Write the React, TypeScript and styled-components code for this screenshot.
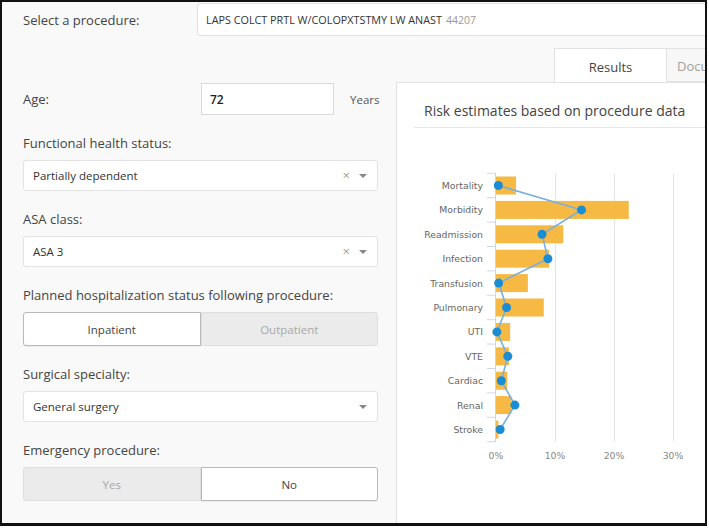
import React from 'react';
import styled, { createGlobalStyle } from 'styled-components';

const GlobalStyle = createGlobalStyle`
  body {
    margin: 0;
    background: #fff;
  }
`;

const Frame = styled.div`
  width: 707px;
  height: 526px;
  box-sizing: border-box;
  border: 2px solid #111;
  border-bottom-width: 3px;
  background: #f9f9f9;
  overflow: hidden;
  display: flex;
  flex-direction: column;
  font-family: 'Open Sans', 'Noto Sans', sans-serif;
  color: #444;
`;

const TopBar = styled.div`
  display: flex;
  align-items: center;
  padding: 1px 0 0 21px;
  flex-shrink: 0;
`;

const FieldLabel = styled.div<{ $width?: number }>`
  font-size: 13px;
  line-height: 20px;
  color: #444;
  width: ${(p) => (p.$width ? `${p.$width}px` : 'auto')};
  flex-shrink: 0;
`;

const ProcedureBox = styled.div`
  width: 540px;
  height: 33px;
  box-sizing: border-box;
  flex-shrink: 0;
  border: 1px solid #e1e1e1;
  border-radius: 3px;
  background: #fff;
  padding: 0 8px;
  display: flex;
  align-items: center;
  gap: 4px;
  font-size: 10.8px;
  color: #333;
`;

const Code = styled.span`
  color: #999;
  font-size: 10.5px;
`;

const Main = styled.div`
  display: flex;
  align-items: flex-start;
  flex: 1;
  min-height: 0;
`;

const LeftCol = styled.div`
  width: 355px;
  margin-left: 21px;
  padding-top: 47px;
  flex-shrink: 0;
`;

const AgeRow = styled.div`
  display: flex;
  align-items: center;
  height: 32px;
`;

const AgeInput = styled.div`
  width: 133px;
  height: 32px;
  box-sizing: border-box;
  flex-shrink: 0;
  border: 1px solid #d9d9d9;
  background: #fff;
  padding-left: 8px;
  display: flex;
  align-items: center;
  font-size: 12px;
  font-weight: 600;
  color: #222;
`;

const Unit = styled.span`
  margin-left: 16px;
  font-size: 11.5px;
  color: #555;
  white-space: nowrap;
`;

const Field = styled.div`
  margin-top: 18px;
  ${FieldLabel} {
    margin-bottom: 7px;
  }
`;

const Select = styled.div`
  height: 31px;
  box-sizing: border-box;
  border: 1px solid #e3e3e3;
  border-radius: 3px;
  background: #fff;
  padding: 0 10px 0 9px;
  display: flex;
  align-items: center;
  font-size: 11.5px;
  color: #333;
`;

const SelectValue = styled.span`
  flex: 1;
`;

const Clear = styled.span`
  font-size: 13px;
  color: #a0a0a0;
  margin-right: 9px;
  line-height: 1;
`;

const Caret = styled.span`
  width: 0;
  height: 0;
  border-left: 4px solid transparent;
  border-right: 4px solid transparent;
  border-top: 4px solid #888;
`;

const Toggle = styled.div`
  display: grid;
  grid-template-columns: 1fr 1fr;
  height: 34px;
`;

const ToggleOption = styled.div<{ $active?: boolean }>`
  display: flex;
  align-items: center;
  justify-content: center;
  font-size: 11.5px;
  box-sizing: border-box;
  border: 1px solid ${(p) => (p.$active ? '#b9b9b9' : '#dedede')};
  background: ${(p) => (p.$active ? '#fff' : '#ebebeb')};
  color: ${(p) => (p.$active ? '#444' : '#a8a8a8')};
  box-shadow: ${(p) => (p.$active ? '0 1px 1px rgba(0,0,0,0.06)' : 'none')};
  &:first-child {
    border-radius: 3px 0 0 3px;
  }
  &:last-child {
    border-radius: 0 3px 3px 0;
  }
`;

const RightCol = styled.div`
  flex: 1;
  margin-left: 18px;
  margin-top: 12px;
  align-self: stretch;
  display: flex;
  flex-direction: column;
  min-width: 0;
`;

const Tabs = styled.div`
  display: flex;
  padding-left: 158px;
  height: 34px;
  flex-shrink: 0;
  overflow: hidden;
`;

const Tab = styled.div<{ $active?: boolean }>`
  width: ${(p) => (p.$active ? '113px' : '120px')};
  flex-shrink: 0;
  box-sizing: border-box;
  border: 1px solid #e2e2e2;
  border-left-width: ${(p) => (p.$active ? '1px' : '0')};
  border-bottom: ${(p) => (p.$active ? 'none' : '1px solid #e2e2e2')};
  background: ${(p) => (p.$active ? '#fff' : '#f7f7f7')};
  color: ${(p) => (p.$active ? '#444' : '#a0a0a0')};
  font-size: 13px;
  padding-top: 2px;
  display: flex;
  align-items: center;
  justify-content: ${(p) => (p.$active ? 'center' : 'flex-start')};
  padding-left: ${(p) => (p.$active ? '0' : '10px')};
  white-space: nowrap;
`;

const Panel = styled.div`
  flex: 1;
  background: #fff;
  border-top: 1px solid #e2e2e2;
  border-left: 1px solid #e2e2e2;
  padding-left: 17px;
`;

const PanelTitle = styled.div`
  padding: 18px 0 6px 10px;
  font-size: 14px;
  line-height: 20px;
  color: #444;
  border-bottom: 1px solid #e8e8e8;
  white-space: nowrap;
`;

const ChartSvg = styled.svg`
  display: block;
  margin-top: 12px;
  overflow: visible;
`;

const categories = [
  'Mortality',
  'Morbidity',
  'Readmission',
  'Infection',
  'Transfusion',
  'Pulmonary',
  'UTI',
  'VTE',
  'Cardiac',
  'Renal',
  'Stroke',
];
const bars = [3.4, 22.5, 11.4, 9.0, 5.4, 8.1, 2.4, 2.2, 1.9, 2.6, 0.4];
const dots = [0.4, 14.5, 7.8, 8.8, 0.45, 1.8, 0.15, 2.0, 0.9, 3.2, 0.7];

const X0 = 82;
const PX = 5.9;
const ROW0 = 45.5;
const STEP = 24.4;

const RiskChart = () => {
  const top = ROW0 - STEP / 2;
  const bottom = ROW0 + STEP * (categories.length - 0.5);
  const linePoints = dots
    .map((v, i) => `${X0 + v * PX},${ROW0 + i * STEP}`)
    .join(' ');

  return (
    <ChartSvg width={292} height={330}>
      {[1, 2, 3].map((k) => (
        <line
          key={k}
          x1={X0 + k * 59 + 0.5}
          x2={X0 + k * 59 + 0.5}
          y1={top}
          y2={bottom}
          stroke="#e4e4e4"
          strokeWidth={1}
        />
      ))}
      <line x1={X0 - 0.5} x2={X0 - 0.5} y1={top} y2={bottom} stroke="#ccd6eb" />
      {categories.map((_, i) => (
        <line
          key={i}
          x1={X0 - 9}
          x2={X0}
          y1={top + i * STEP}
          y2={top + i * STEP}
          stroke="#ccd6eb"
        />
      ))}
      <line x1={X0 - 9} x2={X0} y1={bottom} y2={bottom} stroke="#ccd6eb" />
      {categories.map((c, i) => (
        <g key={c}>
          <rect
            x={X0}
            y={ROW0 + i * STEP - 9}
            width={bars[i] * PX}
            height={18}
            fill="#f6b943"
          />
          <text
            x={69}
            y={ROW0 + i * STEP + 3.5}
            textAnchor="end"
            fontFamily="'DejaVu Sans', sans-serif"
            fontSize={9.3}
            fill="#666"
          >
            {c}
          </text>
        </g>
      ))}
      <polyline points={linePoints} fill="none" stroke="#78b0e0" strokeWidth={1.6} />
      {dots.map((v, i) => (
        <circle key={i} cx={X0 + v * PX} cy={ROW0 + i * STEP} r={4.5} fill="#1b8dd5" />
      ))}
      {[0, 10, 20, 30].map((v) => (
        <text
          key={v}
          x={X0 + v * PX}
          y={bottom + 17}
          textAnchor="middle"
          fontFamily="'DejaVu Sans', sans-serif"
          fontSize={9.3}
          fill="#888"
        >
          {v}%
        </text>
      ))}
    </ChartSvg>
  );
};

const SelectField = ({
  label,
  value,
  clearable,
}: {
  label: string;
  value: string;
  clearable?: boolean;
}) => (
  <Field>
    <FieldLabel>{label}</FieldLabel>
    <Select>
      <SelectValue>{value}</SelectValue>
      {clearable && <Clear>×</Clear>}
      <Caret />
    </Select>
  </Field>
);

const ToggleField = ({
  label,
  options,
  selected,
}: {
  label: string;
  options: string[];
  selected: number;
}) => (
  <Field>
    <FieldLabel>{label}</FieldLabel>
    <Toggle>
      {options.map((o, i) => (
        <ToggleOption key={o} $active={i === selected}>
          {o}
        </ToggleOption>
      ))}
    </Toggle>
  </Field>
);

const App = () => {
  return (
    <>
      <GlobalStyle />
      <Frame>
        <TopBar>
          <FieldLabel $width={174}>Select a procedure:</FieldLabel>
          <ProcedureBox>
            LAPS COLCT PRTL W/COLOPXTSTMY LW ANAST <Code>44207</Code>
          </ProcedureBox>
        </TopBar>
        <Main>
          <LeftCol>
            <AgeRow>
              <FieldLabel $width={178}>Age:</FieldLabel>
              <AgeInput>72</AgeInput>
              <Unit>Years</Unit>
            </AgeRow>
            <SelectField
              label="Functional health status:"
              value="Partially dependent"
              clearable
            />
            <SelectField label="ASA class:" value="ASA 3" clearable />
            <ToggleField
              label="Planned hospitalization status following procedure:"
              options={['Inpatient', 'Outpatient']}
              selected={0}
            />
            <SelectField label="Surgical specialty:" value="General surgery" />
            <ToggleField
              label="Emergency procedure:"
              options={['Yes', 'No']}
              selected={1}
            />
          </LeftCol>
          <RightCol>
            <Tabs>
              <Tab $active>Results</Tab>
              <Tab>Documentation</Tab>
            </Tabs>
            <Panel>
              <PanelTitle>Risk estimates based on procedure data</PanelTitle>
              <RiskChart />
            </Panel>
          </RightCol>
        </Main>
      </Frame>
    </>
  );
};

export default App;
